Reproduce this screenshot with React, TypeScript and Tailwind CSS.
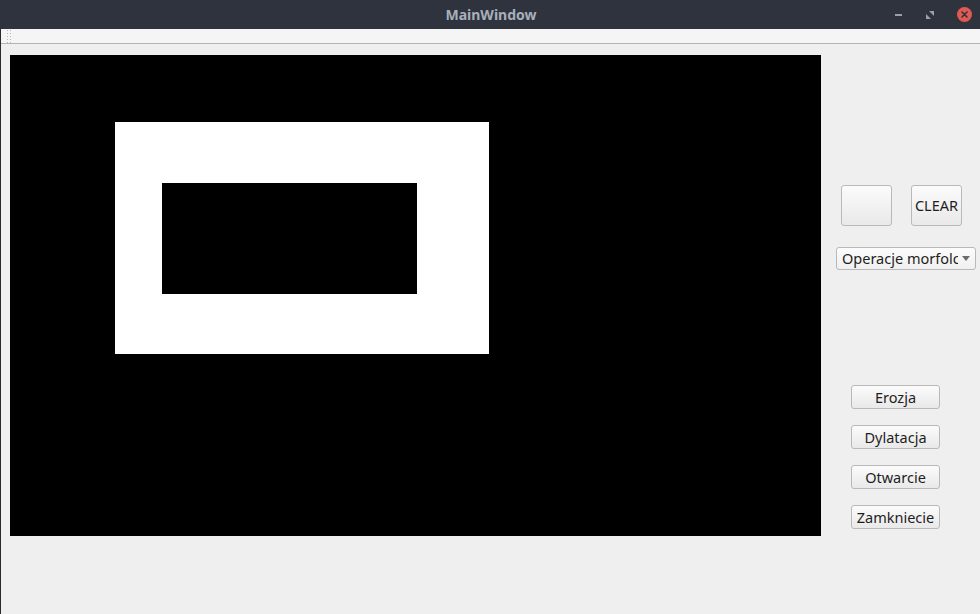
import React from "react";

const btn =
  "border border-[#b9b9b9] rounded-[3px] bg-gradient-to-b from-[#fbfbfb] to-[#e9e9e9] text-[#1e1e1e] text-[14.5px] leading-none flex items-center justify-center";

function TitleBar() {
  return (
    <div className="h-[29px] bg-[#2f333d] flex items-center relative shrink-0">
      <div className="flex-1 text-center text-[14px] font-bold text-[#a7afbc] pl-[2px]">MainWindow</div>
      <div className="absolute right-0 top-0 h-full flex items-center">
        <div className="w-[7px] h-[2px] bg-[#9aa0aa] mr-[24px]" />
        {/* restore icon */}
        <svg width="8" height="8" viewBox="0 0 8 8" className="mr-[23px]">
          <path d="M3 0h5v5z" fill="#9aa0aa" />
          <path d="M0 3l5 5h-5z" fill="#9aa0aa" />
        </svg>
        <div className="w-[15px] h-[15px] rounded-full bg-[#df5a53] flex items-center justify-center mr-[8px]">
          <svg width="7" height="7" viewBox="0 0 7 7">
            <path d="M1 1l5 5M6 1l-5 5" stroke="#2f333d" strokeWidth="1.6" strokeLinecap="round" />
          </svg>
        </div>
      </div>
    </div>
  );
}

function ToolBar() {
  return (
    <div className="h-[15px] bg-[#f5f5f5] border-b border-[#b4b4b4] flex items-start pl-[6px] pt-[1px] shrink-0">
      <div className="grid grid-cols-2 gap-x-[2px] gap-y-[2px]">
        {Array.from({ length: 10 }).map((_, i) => (
          <div key={i} className="w-px h-px bg-[#b9b9b9]" />
        ))}
      </div>
    </div>
  );
}

function Canvas() {
  return (
    <div className="w-[811px] h-[481px] bg-black pl-[105px] pt-[67px] shrink-0">
      <div className="w-[374px] h-[232px] bg-white pl-[47px] pt-[61px]">
        <div className="w-[255px] h-[111px] bg-black" />
      </div>
    </div>
  );
}

export default function App() {
  return (
    <div
      className="w-[980px] h-[614px] flex flex-col bg-[#efefef] overflow-hidden"
      style={{ fontFamily: '"Noto Sans", "DejaVu Sans", sans-serif' }}
    >
      <TitleBar />
      <div className="flex flex-col flex-1 border-l border-[#2a2a2a]">
        <ToolBar />
        <div className="flex flex-1 pt-[11px] pl-[9px]">
          <Canvas />
          <div className="flex flex-col pt-[130px]">
            <div className="flex pl-[20px] gap-[19px]">
              <div className={`${btn} w-[51px] h-[41px]`} />
              <div className={`${btn} w-[51px] h-[41px]`}>CLEAR</div>
            </div>
            <div className="mt-[21px] ml-[15px] w-[140px] h-[23px] border border-[#b9b9b9] rounded-[3px] bg-gradient-to-b from-[#fcfcfc] to-[#f0f0f0] flex items-center pl-[5px] pr-[5px] text-[14.5px] text-[#1e1e1e] overflow-hidden">
              <span className="flex-1 whitespace-nowrap overflow-hidden">Operacje morfologiczne</span>
              <svg width="8" height="5" viewBox="0 0 8 5" className="ml-[4px] shrink-0">
                <path d="M0 0h8l-4 5z" fill="#6c6c6c" />
              </svg>
            </div>
            <div className="mt-[115px] ml-[30px] flex flex-col gap-[16px]">
              {["Erozja", "Dylatacja", "Otwarcie", "Zamkniecie"].map((t) => (
                <div key={t} className={`${btn} w-[89px] h-[24px]`}>
                  {t}
                </div>
              ))}
            </div>
          </div>
        </div>
      </div>
    </div>
  );
}
